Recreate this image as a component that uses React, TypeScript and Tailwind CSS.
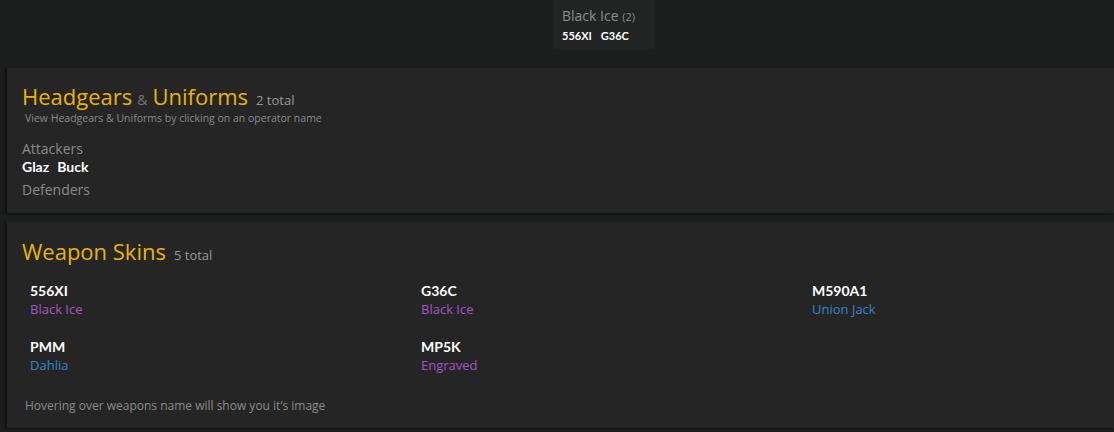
import React from 'react';

const skins = [
  { weapon: '556XI', name: 'Black Ice', color: 'text-[#a256c4]' },
  { weapon: 'G36C', name: 'Black Ice', color: 'text-[#a256c4]' },
  { weapon: 'M590A1', name: 'Union Jack', color: 'text-[#2e86cb]' },
  { weapon: 'PMM', name: 'Dahlia', color: 'text-[#2e86cb]' },
  { weapon: 'MP5K', name: 'Engraved', color: 'text-[#a256c4]' },
];

const bold = "font-['Lato',sans-serif] font-bold text-white";

const App = () => {
  return (
    <div className="min-h-[432px] w-[1114px] overflow-hidden bg-[#1c1e1e] font-['Open_Sans',sans-serif]">
      {/* pack card */}
      <div className="h-[60px] pl-[553px]">
        <div className="w-[102px] h-[50px] bg-[#222424] px-[9px] pt-[6px]">
          <div className="text-[14px] leading-[20px] text-[#8c8c8c]">
            Black Ice <span className="text-[11px]">(2)</span>
          </div>
          <div className={`flex gap-[9px] text-[11px] leading-[17px] ${bold}`}>
            <span>556XI</span>
            <span>G36C</span>
          </div>
        </div>
      </div>

      <div className="flex flex-col gap-[9px] pl-[7px] pt-[8px]">
        {/* headgears */}
        <section className="h-[145px] bg-[#252525] shadow-[-2px_1px_2px_rgba(0,0,0,0.5)] pl-[15px] pt-[14px]">
          <div className="flex items-baseline">
            <h2 className="text-[22px] leading-[29px] text-[#eab308]">Headgears</h2>
            <span className="mx-[5px] text-[14px] text-[#777]">&amp;</span>
            <h2 className="text-[22px] leading-[29px] text-[#eab308]">Uniforms</h2>
            <span className="ml-[8px] text-[13px] text-[#999]">2 total</span>
          </div>
          <p className="pl-[3px] text-[10.5px] leading-[14px] text-[#8a8a8a]">
            View Headgears &amp; Uniforms by clicking on an operator name
          </p>
          <div className="mt-[15px] text-[14px] leading-[18px] text-[#8a8a8a]">Attackers</div>
          <div className={`flex gap-[8px] text-[14px] leading-[17px] ${bold}`}>
            <span>Glaz</span>
            <span>Buck</span>
          </div>
          <div className="mt-[6px] text-[14px] leading-[18px] text-[#8a8a8a]">Defenders</div>
        </section>

        {/* weapon skins */}
        <section className="h-[206px] bg-[#252525] shadow-[-2px_1px_2px_rgba(0,0,0,0.5)] pl-[15px] pt-[15px]">
          <div className="flex items-baseline">
            <h2 className="text-[22px] leading-[29px] text-[#eab308]">Weapon Skins</h2>
            <span className="ml-[8px] text-[13px] text-[#999]">5 total</span>
          </div>
          <div className="mt-[16px] grid grid-cols-[391px_391px_391px] gap-y-[20px] pl-[8px]">
            {skins.map((s) => (
              <div key={s.weapon} className="flex flex-col">
                <span className={`text-[14px] leading-[18px] ${bold}`}>{s.weapon}</span>
                <span className={`text-[13px] leading-[18px] ${s.color}`}>{s.name}</span>
              </div>
            ))}
          </div>
          <p className="mt-[24px] pl-[3px] text-[12px] leading-[16px] text-[#8a8a8a]">
            Hovering over weapons name will show you it’s image
          </p>
        </section>
      </div>
    </div>
  );
};

export default App;
